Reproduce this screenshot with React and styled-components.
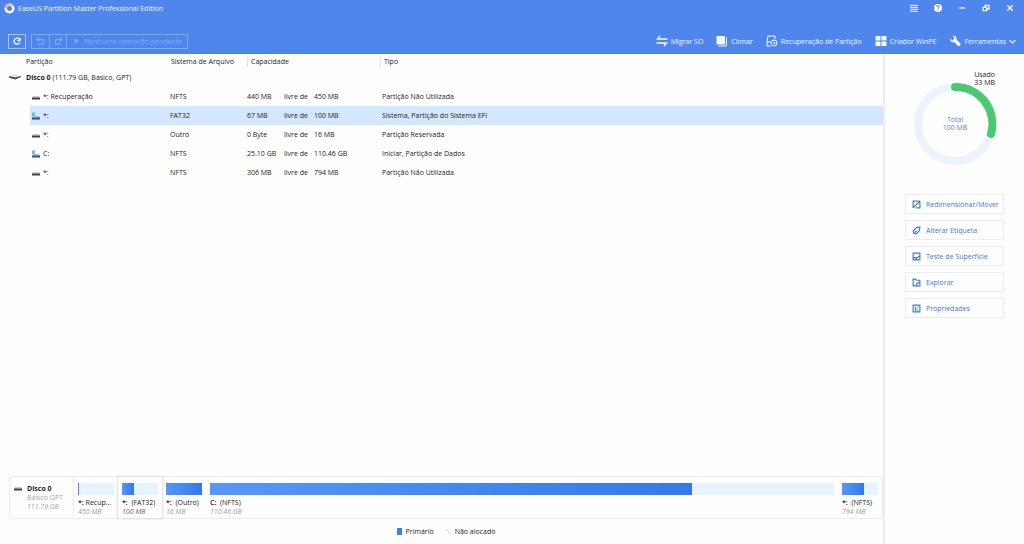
import React from "react";
import styled, { createGlobalStyle, css } from "styled-components";

const Global = createGlobalStyle`
  *, *::before, *::after { box-sizing: border-box; }
  html, body, #root { height: 100%; margin: 0; }
  body {
    font-family: "Open Sans", "Noto Sans", sans-serif;
    font-size: 7px;
    line-height: 9px;
    color: #1c1c1c;
    background: #fefefe;
  }
  button { font: inherit; color: inherit; background: none; border: 0; padding: 0; cursor: pointer; }
`;

const Window = styled.div`
  min-height: 100%;
  display: flex;
  flex-direction: column;
`;

const Header = styled.header`
  background: #4f86ec;
  color: #f4f8ff;
`;

const TitleBar = styled.div`
  height: 28px;
  padding: 0 8px 12px 4px;
  display: flex;
  align-items: center;
  justify-content: space-between;
`;

const Brand = styled.h1`
  margin: 0;
  display: flex;
  align-items: center;
  gap: 3px;
  font-size: 7px;
  font-weight: 400;
`;

const WindowControls = styled.div`
  display: flex;
  gap: 12px;
`;

const ControlButton = styled.button`
  width: 12px;
  height: 12px;
  display: grid;
  place-items: center;
`;

const ToolBar = styled.div`
  height: 26px;
  padding: 0 8px;
  display: flex;
  align-items: center;
  justify-content: space-between;
`;

const ToolGroup = styled.div`
  display: flex;
  align-items: center;
  gap: ${(p) => p.$gap}px;
`;

const Joined = styled.div`
  display: flex;
  border: 1px solid #7fa9f4;
`;

const OutlineButton = styled.button`
  height: 15px;
  width: 18px;
  display: grid;
  place-items: center;
  border: 1px solid #a9c5f8;
`;

const PendingButton = styled.button`
  height: 13px;
  width: ${(p) => (p.$wide ? "auto" : "17px")};
  padding: ${(p) => (p.$wide ? "0 5px 0 7px" : "0")};
  display: flex;
  align-items: center;
  justify-content: center;
  gap: 4px;
  color: #82aaf5;
  & + & { border-left: 1px solid #7fa9f4; }
`;

const ToolLink = styled.button`
  display: flex;
  align-items: center;
  gap: 3px;
`;

const Content = styled.div`
  flex: 1;
  display: flex;
`;

const Main = styled.main`
  flex: 1;
  min-width: 0;
  display: flex;
  flex-direction: column;
`;

const ListArea = styled.div`
  flex: 1;
`;

const PartitionTable = styled.table`
  width: 100%;
  table-layout: fixed;
  border-collapse: collapse;
  text-align: left;
  th { font-weight: 400; }
  th, td { padding: 0; white-space: nowrap; }
`;

const Col = styled.col`
  width: ${(p) => (p.$w ? p.$w + "px" : "auto")};
`;

const HeadCell = styled.th`
  height: 15px;
  && { padding-left: ${(p) => p.$pad}px; }
  ${(p) => p.$line && css`
    background: linear-gradient(#e4e4e4, #e4e4e4) 0 3px / 1px 10px no-repeat;
  `}
`;

const DiskCell = styled.th`
  height: 16px;
  && { padding-left: 9px; }
`;

const IconLabel = styled.span`
  display: flex;
  align-items: center;
  gap: ${(p) => p.$gap}px;
`;

const Row = styled.tr`
  height: 19px;
  td:not(:first-child) {
    background: ${(p) => (p.$selected ? "#d3e7fd" : "transparent")};
  }
`;

const Cell = styled.td`
  && { padding-left: ${(p) => p.$pad || 0}px; }
`;

const Capacity = styled.span`
  display: grid;
  grid-template-columns: 37px 30px auto;
`;

const Spacer = styled.tr`
  height: 2px;
`;

const MapSection = styled.section`
  padding-left: 9px;
`;

const DiskMap = styled.div`
  height: 43px;
  display: flex;
  border: 1px solid #ececec;
  border-radius: 2px;
`;

const DiskInfo = styled.div`
  width: 64px;
  padding: 7px 4px 0;
  display: flex;
  gap: 5px;
  border-right: 1px solid #ececec;
  color: #ababab;
  strong { display: block; color: #1e1e1e; }
`;

const Segments = styled.div`
  flex: 1;
  display: flex;
  min-width: 0;
`;

const Segment = styled.button`
  flex: ${(p) => (p.$grow ? "1" : "0 0 44px")};
  min-width: 0;
  padding: 6px 4px 0;
  text-align: left;
  display: flex;
  flex-direction: column;
  ${(p) => p.$selected && css`
    background: #fff;
    box-shadow: 0 0 2px 1px #dedede;
  `}
`;

const Bar = styled.span`
  width: 100%;
  height: 12px;
  margin-bottom: 3px;
  background: #e6f3fd;
`;

const Fill = styled.span`
  display: block;
  height: 100%;
  background: linear-gradient(90deg, #5697f8, #3379ee);
`;

const SegmentName = styled.span`
  white-space: pre;
  b { font-weight: 600; }
`;

const SegmentSize = styled.span`
  font-style: italic;
  color: ${(p) => (p.$selected ? "#6c6c6c" : "#a0a0a0")};
`;

const Legend = styled.div`
  height: 25px;
  display: flex;
  align-items: center;
  justify-content: center;
  gap: 12px;
`;

const Swatch = styled.i`
  width: 5px;
  height: 7px;
  background: ${(p) => (p.$used ? "#3d80e8" : "linear-gradient(45deg, #fff 40%, #dcdcdc 50%, #fff 60%)")};
`;

const Side = styled.aside`
  flex: 0 0 141px;
  padding: 17px 20px 0;
  border-left: 2px solid #ededf0;
`;

const UsageFigure = styled.figure`
  margin: 0;
  height: 123px;
`;

const UsedCaption = styled.figcaption`
  padding-right: 9px;
  text-align: right;
  line-height: 8px;
  color: #222;
`;

const Ring = styled.div`
  width: 84px;
  height: 84px;
  margin: -5px auto 0 8px;
  display: grid;
  > * { grid-area: 1 / 1; }
`;

const Total = styled.span`
  place-self: center;
  text-align: center;
  line-height: 8px;
  color: #5584e4;
`;

const Actions = styled.nav`
  display: flex;
  flex-direction: column;
  gap: 6px;
`;

const ActionButton = styled.button`
  height: 20px;
  padding-left: 6px;
  display: flex;
  align-items: center;
  gap: 5px;
  border: 1px solid #ebedf1;
  color: #4078e0;
  white-space: nowrap;
`;

const Svg = ({ size = 12, w, h, box = "0 0 24 24", sw = 2, children }) => (
  <svg width={w || size} height={h || size} viewBox={box} fill="none" stroke="currentColor" strokeWidth={sw} aria-hidden="true">
    {children}
  </svg>
);

const Logo = () => (
  <Svg size={11} box="0 0 22 22" sw={5}>
    <circle cx="11" cy="11" r="7.5" stroke="#fff" />
    <path d="M3.500 11A7.500 7.500 0 0 1 11 3.500" stroke="#f2a36b" />
    <path d="M11 3.500A7.500 7.500 0 0 1 17 6.500" stroke="#b9d0f8" />
    <circle cx="11" cy="11" r="3.500" fill="#5a7fd0" stroke="none" />
  </Svg>
);

const DriveIcon = () => (
  <Svg w={8} h={8} box="0 0 16 16">
    <path d="M2 6h12l2 3H0z" fill="#c9cbce" stroke="none" />
    <path d="M0 9h16v4H0z" fill="#3c3f44" stroke="none" />
  </Svg>
);

const SystemDriveIcon = () => (
  <Svg w={8} h={8} box="0 0 16 16">
    <path d="M0 1h6v7H0z" fill="#6cbdec" stroke="none" />
    <path d="M2 8h12l2 3H0z" fill="#9dbccf" stroke="none" />
    <path d="M0 11h16v4H0z" fill="#2f5268" stroke="none" />
  </Svg>
);

const DiskIcon = () => (
  <Svg w={12} h={6} box="0 0 24 12">
    <path d="M3 4 13 1l10 3-9 4z" fill="#dcdee1" stroke="none" />
    <path d="M0 4l13 3 11-3v2l-11 5L1 8z" fill="#44474c" stroke="none" />
  </Svg>
);

const partitions = [
  { id: 1, name: "*: Recuperação", fs: "NFTS", free: "440 MB", total: "450 MB", type: "Partição Não Utilizada" },
  { id: 2, name: "*:", fs: "FAT32", free: "67 MB", total: "100 MB", type: "Sistema, Partição do Sistema EFI", system: true, selected: true },
  { id: 3, name: "*:", fs: "Outro", free: "0 Byte", total: "16 MB", type: "Partição Reservada" },
  { id: 4, name: "C:", fs: "NFTS", free: "25.10 GB", total: "110.46 GB", type: "Iniciar, Partição de Dados", system: true },
  { id: 5, name: "*:", fs: "NFTS", free: "306 MB", total: "794 MB", type: "Partição Não Utilizada" },
];

const segments = [
  { id: 1, letter: "*:", name: " Recup...", size: "450 MB", used: 2 },
  { id: 2, letter: "*:", name: "  (FAT32)", size: "100 MB", used: 33, selected: true },
  { id: 3, letter: "*:", name: "  (Outro)", size: "16 MB", used: 100 },
  { id: 4, letter: "C:", name: "  (NFTS)", size: "110.46 GB", used: 77.3, grow: true },
  { id: 5, letter: "*:", name: "  (NFTS)", size: "794 MB", used: 61 },
];

const tools = [
  {
    label: "Migrar SO",
    icon: <Svg sw={3}><path d="M8 2 3 8h20M1 16h20l-5 6" /></Svg>,
  },
  {
    label: "Clonar",
    icon: (
      <Svg>
        <path d="M1 2h17v17H1z" fill="currentColor" stroke="none" />
        <path d="M21 5v17H5" />
      </Svg>
    ),
  },
  {
    label: "Recuperação de Partição",
    icon: (
      <Svg>
        <path d="M18 8V2H4L2 14v8h7M2 14h7" />
        <circle cx="16" cy="16" r="6" />
        <path d="M16 13v4h3" />
      </Svg>
    ),
  },
  {
    label: "Criador WinPE",
    icon: (
      <Svg>
        <path d="M1 2h10v9H1zM13 2h10v9H13zM1 13h10v9H1zM13 13h10v9H13z" fill="currentColor" stroke="none" />
      </Svg>
    ),
  },
  {
    label: "Ferramentas",
    caret: true,
    icon: (
      <Svg>
        <path d="M2 7a6 6 0 0 0 8 7l8 8q2 1 4-1t1-4l-8-8a6 6 0 0 0-8-7l4 4-4 5z" fill="currentColor" stroke="none" />
      </Svg>
    ),
  },
];

const actions = [
  { label: "Redimensionar/Mover", icon: <path d="M3 2v19M2 3h12M21 3v19M22 21H10M4 20 20 4M15 3h6" /> },
  { label: "Alterar Etiqueta", icon: <path d="M3 14 12 4l9-1-1 9-9 9-6-1zM7 18l5-5" /> },
  { label: "Teste de Superfície", icon: <path d="M3 21V3h18v18zM3 15h7v6M10 18l11-8" /> },
  { label: "Explorar", icon: <path d="M21 9V6h-9L9 3H3v18h18V9M12 21v-6l9-4" /> },
  { label: "Propriedades", icon: <path d="M3 3h18v18H3zM9 7v9h7M13 8h4" /> },
];

const controls = [
  { label: "Menu", icon: <path d="M0 4h24M0 10h24M0 16h24M0 22h24" strokeWidth="3" /> },
  {
    label: "Ajuda",
    icon: (
      <>
        <circle cx="12" cy="12" r="12" fill="#fff" stroke="none" />
        <path d="M8 9q0-4 4-4t4 3-4 5v2M12 17v3" stroke="#4f86ec" strokeWidth="3" />
      </>
    ),
  },
  { label: "Minimizar", icon: <path d="M3 12h18" strokeWidth="4" /> },
  { label: "Restaurar", icon: <path d="M3 10h11v10H3zM9 10V4h12v11h-7" strokeWidth="4" /> },
  { label: "Fechar", icon: <path d="M4 4l16 16M20 4 4 20" strokeWidth="4" /> },
];

export default function App() {
  return (
    <Window>
      <Global />
      <Header>
        <TitleBar>
          <Brand><Logo />EaseUS Partition Master Professional Edition</Brand>
          <WindowControls>
            {controls.map((c) => (
              <ControlButton key={c.label} aria-label={c.label}><Svg size={8}>{c.icon}</Svg></ControlButton>
            ))}
          </WindowControls>
        </TitleBar>
        <ToolBar>
          <ToolGroup $gap={5}>
            <OutlineButton aria-label="Atualizar">
              <Svg size={8} sw={4}><path d="M20 17a9 9 0 1 1 1-7M21 3v8h-8" /></Svg>
            </OutlineButton>
            <Joined>
              <PendingButton aria-label="Desfazer">
                <Svg size={9} sw={3}><path d="M8 2 3 7l5 5M3 7h17v12H6" /></Svg>
              </PendingButton>
              <PendingButton aria-label="Refazer">
                <Svg size={9} sw={3}><path d="M16 2l5 5-5 5M21 7H4v12h14" /></Svg>
              </PendingButton>
              <PendingButton $wide>
                <Svg size={6}><path d="M3 1v22l18-11z" fill="currentColor" stroke="none" /></Svg>
                Nenhuma operação pendente
              </PendingButton>
            </Joined>
          </ToolGroup>
          <ToolGroup $gap={13}>
            {tools.map((t) => (
              <ToolLink key={t.label}>
                {t.icon}
                {t.label}
                {t.caret && <Svg size={7} sw={4}><path d="M2 7l10 10L22 7" /></Svg>}
              </ToolLink>
            ))}
          </ToolGroup>
        </ToolBar>
      </Header>
      <Content>
        <Main>
          <ListArea>
            <PartitionTable>
              <colgroup>
                <Col $w={30} /><Col $w={137} /><Col $w={80} /><Col $w={133} /><Col />
              </colgroup>
              <thead>
                <tr>
                  <HeadCell colSpan={2} $pad={26}>Partição</HeadCell>
                  <HeadCell $pad={4}>Sistema de Arquivo</HeadCell>
                  <HeadCell $pad={4} $line>Capacidade</HeadCell>
                  <HeadCell $pad={4} $line>Tipo</HeadCell>
                </tr>
              </thead>
              <tbody>
                <tr>
                  <DiskCell colSpan={5} scope="rowgroup">
                    <IconLabel $gap={5}><DiskIcon /><span><b>Disco 0</b> (111.79 GB, Básico, GPT)</span></IconLabel>
                  </DiskCell>
                </tr>
                <Spacer />
                {partitions.map((p) => (
                  <Row key={p.id} $selected={p.selected}>
                    <Cell />
                    <Cell $pad={2}>
                      <IconLabel $gap={3}>{p.system ? <SystemDriveIcon /> : <DriveIcon />}{p.name}</IconLabel>
                    </Cell>
                    <Cell $pad={3}>{p.fs}</Cell>
                    <Cell><Capacity><span>{p.free}</span><span>livre de</span><span>{p.total}</span></Capacity></Cell>
                    <Cell $pad={2}>{p.type}</Cell>
                  </Row>
                ))}
              </tbody>
            </PartitionTable>
          </ListArea>
          <MapSection>
            <DiskMap>
              <DiskInfo>
                <DriveIcon />
                <div><strong>Disco 0</strong>Básico GPT<br /><em>111.79 GB</em></div>
              </DiskInfo>
              <Segments>
                {segments.map((s) => (
                  <Segment key={s.id} $grow={s.grow} $selected={s.selected}>
                    <Bar><Fill style={{ width: s.used + "%" }} /></Bar>
                    <SegmentName><b>{s.letter}</b>{s.name}</SegmentName>
                    <SegmentSize $selected={s.selected}>{s.size}</SegmentSize>
                  </Segment>
                ))}
              </Segments>
            </DiskMap>
            <Legend>
              <IconLabel $gap={4}><Swatch $used />Primário</IconLabel>
              <IconLabel $gap={4}><Swatch />Não alocado</IconLabel>
            </Legend>
          </MapSection>
        </Main>
        <Side>
          <UsageFigure>
            <UsedCaption>Usado<br />33 MB</UsedCaption>
            <Ring>
              <svg width="84" height="84" viewBox="0 0 84 84" fill="none" strokeWidth="8" role="img" aria-label="Uso da partição">
                <circle cx="42" cy="42" r="37" stroke="#ebf4fd" />
                <path d="M42 5A37 37 0 0 1 78 52" stroke="#4bc872" strokeLinecap="round" />
              </svg>
              <Total>Total<br />100 MB</Total>
            </Ring>
          </UsageFigure>
          <Actions>
            {actions.map((a) => (
              <ActionButton key={a.label}><Svg size={9} sw={3}>{a.icon}</Svg>{a.label}</ActionButton>
            ))}
          </Actions>
        </Side>
      </Content>
    </Window>
  );
}
